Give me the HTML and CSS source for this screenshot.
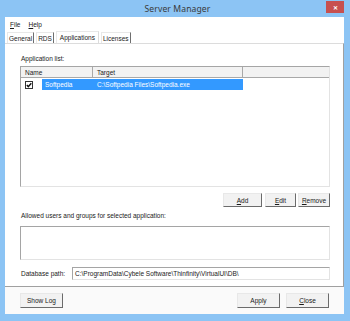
FILE: index.html
```html
<!DOCTYPE html>
<html>
<head>
<meta charset="utf-8">
<link rel="stylesheet" href="styles.css">
</head>
<body>
<div class="window">
  <div class="titlebar">
    <span class="title">Server Manager</span>
    <span class="close">&#x2715;</span>
  </div>
  <div class="client">
    <div class="menubar">
      <span class="menu"><u>F</u>ile</span>
      <span class="menu"><u>H</u>elp</span>
    </div>
    <div class="tabs">
      <span class="tab">General</span>
      <span class="tab">RDS</span>
      <span class="tab active">Applications</span>
      <span class="tab">Licenses</span>
    </div>
    <div class="page">
      <div class="label">Application list:</div>
      <div class="listview">
        <div class="lv-header">
          <span class="col col-name">Name</span>
          <span class="col col-target">Target</span>
          <span class="col col-rest"></span>
        </div>
        <div class="lv-row">
          <span class="check">
            <svg width="8" height="8" viewBox="0 0 8 8"><rect x="0.5" y="0.5" width="7" height="7" fill="#fff" stroke="#333"/><path d="M1.8 4 L3.3 5.6 L6.3 2.2" fill="none" stroke="#111" stroke-width="1.4"/></svg>
          </span>
          <span class="sel">
            <span class="cell-name">Softpedia</span>
            <span class="cell-target">C:\Softpedia Files\Softpedia.exe</span>
          </span>
        </div>
      </div>
      <div class="btnrow">
        <button class="btn btn-add"><u>A</u>dd</button>
        <button class="btn btn-edit"><u>E</u>dit</button>
        <button class="btn btn-remove"><u>R</u>emove</button>
      </div>
      <div class="label label2">Allowed users and groups for selected application:</div>
      <div class="usersbox"></div>
      <div class="dbrow">
        <span class="dblabel">Database path:</span>
        <span class="dbinput">C:\ProgramData\Cybele Software\Thinfinity\VirtualUI\DB\</span>
      </div>
    </div>
    <div class="footer">
      <button class="btn btn-log">Show Log</button>
      <span class="spacer"></span>
      <button class="btn btn-apply">Apply</button>
      <button class="btn btn-close"><u>C</u>lose</button>
    </div>
  </div>
</div>
</body>
</html>
```
FILE: styles.css
```css
* { box-sizing: border-box; }
html, body { margin: 0; padding: 0; }
body {
  width: 350px;
  height: 321px;
  overflow: hidden;
  font-family: "Liberation Sans", Arial, sans-serif;
  font-size: 6.5px;
  color: #1a1a1a;
}
.window {
  width: 350px;
  height: 321px;
  background: #8cc4f4;
  display: flex;
  flex-direction: column;
  padding: 0 6px 7px 5px;
}
.titlebar {
  height: 17px;
  display: flex;
  align-items: flex-start;
  justify-content: center;
  position: relative;
}
.title {
  font-family: "Noto Sans", "Open Sans", sans-serif;
  font-size: 8.6px;
  color: #3a3a3a;
  margin-top: 3px;
  margin-left: 6px;
  letter-spacing: 0.1px;
}
.close {
  position: absolute;
  right: 0;
  top: 1px;
  width: 18px;
  height: 12px;
  background: #c7504f;
  color: #fff;
  font-size: 6px;
  font-weight: bold;
  display: flex;
  align-items: center;
  justify-content: center;
}
.client {
  flex: 1;
  background: #fff;
  display: flex;
  flex-direction: column;
}
.menubar {
  height: 14px;
  display: flex;
  align-items: center;
  padding-left: 5px;
  gap: 8px;
  background: #fff;
}
.menu u, .btn u { text-decoration: underline; }
.tabs {
  height: 12px;
  display: flex;
  align-items: flex-end;
  padding-left: 2px;
  background: #fff;
}
.tab {
  height: 11px;
  padding: 0 1px 0 1px;
  border-right: 1px solid #6e6e6e;
  border-left: 1px solid #e8e8e8;
  border-top: 1px solid #e8e8e8;
  display: flex;
  align-items: center;
  margin-right: 2px;
  background: #fff;
}
.tab.active {
  height: 12px;
  padding: 0 3px;
  border-right: 1px solid #dcdcdc;
  margin-right: 2px;
}
.page {
  height: 244px;
  border-top: 1px solid #dcdcdc;
  border-right: 1px solid #a0a0a0;
  border-bottom: 1px solid #a0a0a0;
  background: #fff;
  padding: 10px 13px 0 15px;
  display: flex;
  flex-direction: column;
}
.label {
  height: 12px;
  padding-left: 1px;
  line-height: 10px;
}
.listview {
  height: 121px;
  border: 1px solid #a5a5a5;
  border-right-color: #e3e3e3;
  border-bottom-color: #e3e3e3;
  background: #fff;
}
.lv-header {
  height: 11px;
  display: flex;
  background: #f2f2f2;
  border-bottom: 1px solid #a8a8a8;
}
.col {
  border-right: 1px solid #a8a8a8;
  display: flex;
  align-items: center;
  padding-left: 4px;
}
.col-name { width: 72px; }
.col-target { width: 150px; }
.col-rest { flex: 1; border-right: none; }
.lv-row {
  height: 11px;
  margin-top: 1px;
  display: flex;
  align-items: center;
}
.check {
  width: 21px;
  padding-left: 4px;
  display: flex;
  align-items: center;
}
.sel {
  width: 201px;
  height: 11px;
  background: #3399ff;
  color: #fff;
  display: flex;
  align-items: center;
}
.cell-name { width: 55px; padding-left: 3px; }
.btnrow {
  height: 14px;
  margin-top: 6px;
  display: flex;
  justify-content: flex-end;
  gap: 2px;
}
.btn {
  font-family: "Liberation Sans", Arial, sans-serif;
  font-size: 6.5px;
  color: #1a1a1a;
  height: 14px;
  padding: 0;
  margin: 0;
  background: #f2f2f2;
  border: 1px solid;
  border-color: #e8e8e8 #6b6b6b #6b6b6b #e8e8e8;
}
.btn-add { width: 39px; margin-right: 1px; }
.btn-edit { width: 31px; }
.btn-remove { width: 32px; }
.label2 { margin-top: 4px; height: 15px; line-height: 10px; }
.usersbox {
  height: 34px;
  border: 1px solid #a5a5a5;
  border-right-color: #e3e3e3;
  border-bottom-color: #e3e3e3;
}
.dbrow {
  margin-top: 7px;
  height: 13px;
  display: flex;
  align-items: center;
}
.dblabel { width: 52px; padding-left: 1px; }
.dbinput {
  flex: 1;
  height: 13px;
  border: 1px solid #a5a5a5;
  border-right-color: #e3e3e3;
  border-bottom-color: #e3e3e3;
  display: flex;
  align-items: center;
  padding-left: 2px;
}
.footer {
  flex: 1;
  display: flex;
  align-items: flex-start;
  padding: 6px 15px 0 15px;
  background: #fafafa;
}
.spacer { flex: 1; }
.btn-log, .btn-apply, .btn-close { height: 15px; width: 43px; }
.btn-apply { margin-right: 6px; }
```
